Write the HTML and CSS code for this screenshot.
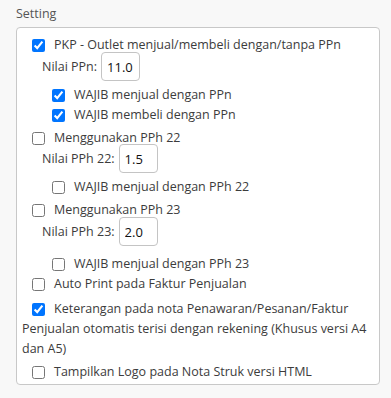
FILE: index.html
```html
<!DOCTYPE html>
<html lang="id">
<head>
    <meta charset="UTF-8">
    <meta name="viewport" content="width=device-width, initial-scale=1.0">
    <title>Setting</title>
    <link rel="stylesheet" href="styles.css">
</head>
<body>
    <div class="setting">
        <div class="setting_title">Setting</div>
        <div class="setting_box">
            <label class="opt"><input type="checkbox" checked>PKP - Outlet menjual/membeli dengan/tanpa PPn</label>
            <div class="nilai nilai_ppn">
                <span>Nilai PPn:</span>
                <input type="text" class="nilai_input" value="11.0">
            </div>
            <label class="opt sub sub_first"><input type="checkbox" checked>WAJIB menjual dengan PPn</label>
            <label class="opt sub"><input type="checkbox" checked>WAJIB membeli dengan PPn</label>

            <label class="opt group"><input type="checkbox">Menggunakan PPh 22</label>
            <div class="nilai">
                <span>Nilai PPh 22:</span>
                <input type="text" class="nilai_input" value="1.5">
            </div>
            <label class="opt sub sub_mid"><input type="checkbox">WAJIB menjual dengan PPh 22</label>

            <label class="opt group"><input type="checkbox">Menggunakan PPh 23</label>
            <div class="nilai nilai_23">
                <span>Nilai PPh 23:</span>
                <input type="text" class="nilai_input" value="2.0">
            </div>
            <label class="opt sub sub_last"><input type="checkbox">WAJIB menjual dengan PPh 23</label>

            <label class="opt"><input type="checkbox">Auto Print pada Faktur Penjualan</label>
            <label class="wrap_opt"><input type="checkbox" checked>Keterangan pada nota Penawaran/Pesanan/Faktur Penjualan otomatis terisi dengan rekening (Khusus versi A4 dan A5)</label>
            <label class="opt last"><input type="checkbox">Tampilkan Logo pada Nota Struk versi HTML</label>
        </div>
    </div>
</body>
</html>
```

FILE: styles.css
```css
* {
    margin: 0;
    padding: 0;
    box-sizing: border-box;
}

body {
    background-color: #f8f8f8;
    font-family: "Open Sans", "Noto Sans", sans-serif;
    font-size: 12.5px;
    color: #3c3c3c;
}

.setting {
    padding: 4px 12px 0 16px;
}

.setting_title {
    line-height: 20px;
    color: #555;
}

.setting_box {
    width: 364px;
    margin-top: 3px;
    padding: 7px 5px 2px 5px;
    background-color: #fff;
    border: 1px solid #c8c8c8;
    border-radius: 4px;
}

.opt {
    display: flex;
    align-items: flex-start;
    height: 20px;
    line-height: 20px;
}

.opt input,
.wrap_opt input {
    width: 13px;
    height: 13px;
    margin: 4px 9px 0 10px;
    flex-shrink: 0;
}

.sub {
    padding-left: 20px;
}

.sub_first {
    margin-top: 4px;
}

.sub_mid {
    margin-top: 1px;
}

.sub_last {
    margin-top: 8px;
}

.group {
    margin-top: 3px;
}

.nilai {
    display: flex;
    align-items: center;
    gap: 4px;
    padding-left: 20px;
    margin-top: -4px;
    margin-bottom: 4px;
}

.nilai_ppn {
    margin-top: -3px;
    margin-bottom: 0;
}

.nilai_23 {
    margin-top: -3px;
    margin-bottom: 3px;
}

.nilai_input {
    width: 39px;
    height: 29px;
    padding: 0 5px;
    border: 1px solid #c4c4c4;
    border-radius: 4px;
    font-family: inherit;
    font-size: 13px;
    color: #111;
    outline: none;
}

.wrap_opt {
    display: block;
    margin-top: 5px;
    line-height: 20px;
}

.wrap_opt input {
    vertical-align: top;
}

.last {
    margin-top: 3px;
}
```
